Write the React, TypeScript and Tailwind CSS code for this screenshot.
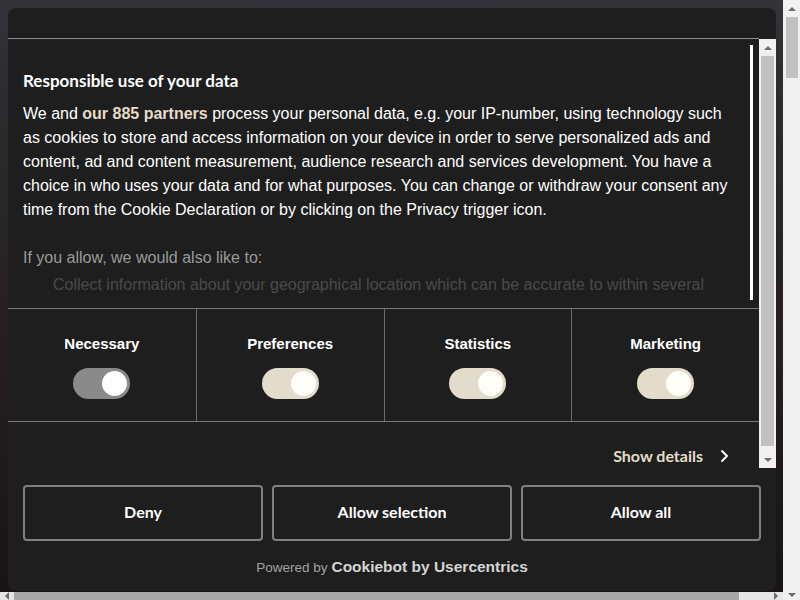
import React from 'react';

const categories = [
  { label: 'Necessary', locked: true },
  { label: 'Preferences', locked: false },
  { label: 'Statistics', locked: false },
  { label: 'Marketing', locked: false },
];

const body = "font-['Liberation_Sans',Arial,sans-serif]";
const lato = "font-['Lato','Liberation_Sans',sans-serif]";

function Toggle({ locked }: { locked: boolean }) {
  return (
    <div
      className={`w-[57px] h-[31px] rounded-full flex items-center justify-end pr-[3px] ${
        locked ? 'bg-[#8a8a8a]' : 'bg-[#e3dbcb]'
      }`}
    >
      <div className={`w-[25px] h-[25px] rounded-full ${locked ? 'bg-white' : 'bg-[#fffdf8]'}`} />
    </div>
  );
}

function Arrow({ dir }: { dir: 'up' | 'down' | 'left' | 'right' }) {
  const pts = {
    up: '0,4 4,0 8,4',
    down: '0,0 8,0 4,4',
    left: '4,0 4,8 0,4',
    right: '0,0 4,4 0,8',
  }[dir];
  const wide = dir === 'up' || dir === 'down';
  return (
    <svg width={wide ? 8 : 4} height={wide ? 4 : 8} viewBox={wide ? '0 0 8 4' : '0 0 4 8'}>
      <polygon points={pts} fill="#6b6b6b" />
    </svg>
  );
}

export default function App() {
  return (
    <div className={`w-[800px] h-[600px] flex overflow-hidden ${body}`}>
      {/* page behind the dialog */}
      <div className="w-[783px] h-[600px] flex flex-col bg-gradient-to-b from-[#34343a] via-[#2a2426] to-[#1a1516]">
        <div className="h-[592px] pt-2 pl-2 pr-[7px]">
          {/* dialog */}
          <div className="h-[583px] rounded-lg bg-[#1e1e1e] flex flex-col overflow-hidden shadow-2xl">
            <div className="h-[31px] shrink-0 border-b border-[#8c8c8c] mr-[17px]" />
            <div className="flex h-[429px] shrink-0">
              <div className="flex-1 flex flex-col">
                {/* text section */}
                <div className="h-[270px] shrink-0 flex border-b border-[#7a7a7a] overflow-hidden">
                  <div className="w-[731px] pl-[15px] pt-[30px] text-[16px] leading-6 text-white">
                    <h2 className={`${lato} font-bold text-[17px] leading-6 mb-[9px]`}>
                      Responsible use of your data
                    </h2>
                    <p>
                      We and <span className="font-bold text-[#e6dcc8]">our 885 partners</span> process your
                      personal data, e.g. your IP-number, using technology such as cookies to store and access
                      information on your device in order to serve personalized ads and content, ad and content
                      measurement, audience research and services development. You have a choice in who uses your
                      data and for what purposes. You can change or withdraw your consent any time from the Cookie
                      Declaration or by clicking on the Privacy trigger icon.
                    </p>
                    <p className="mt-6 text-[#9a9a9a]">If you allow, we would also like to:</p>
                    <p className="mt-[3px] pl-[30px] text-[#4a4a4a] whitespace-nowrap">
                      Collect information about your geographical location which can be accurate to within several
                    </p>
                  </div>
                  <div className="flex-1" />
                  <div className="w-[3px] mr-[6px] mt-[6px] h-[255px] bg-white" />
                </div>
                {/* toggles */}
                <div className="grid grid-cols-4 h-[113px] shrink-0 border-b border-[#7a7a7a]">
                  {categories.map((c, i) => (
                    <div
                      key={c.label}
                      className={`flex flex-col items-center pt-[25px] ${i > 0 ? 'border-l border-[#6b6b6b]' : ''}`}
                    >
                      <span className="font-bold text-[15px] leading-5 text-white">{c.label}</span>
                      <div className="mt-[14px]">
                        <Toggle locked={c.locked} />
                      </div>
                    </div>
                  ))}
                </div>
                <div className="flex-1 flex items-start justify-end pr-[30px] pt-[24px]">
                  <span className={`${lato} font-bold text-[16px] leading-5 text-[#e6dcc8]`}>Show details</span>
                  <svg className="ml-[17px] mt-[3px]" width="9" height="14" viewBox="0 0 9 14" fill="none">
                    <path d="M2 2l5 5-5 5" stroke="#ffffff" strokeWidth="2" strokeLinecap="round" strokeLinejoin="round" />
                  </svg>
                </div>
              </div>
              {/* inner scrollbar */}
              <div className="w-[17px] bg-[#f0f0f0] flex flex-col items-center">
                <div className="h-[17px] flex items-center justify-center">
                  <Arrow dir="up" />
                </div>
                <div className="w-[13px] flex-1 bg-[#c1c1c1] mb-[5px]" />
                <div className="h-[17px] flex items-center justify-center">
                  <Arrow dir="down" />
                </div>
              </div>
            </div>
            {/* buttons */}
            <div className="grid grid-cols-3 gap-[9px] px-[15px] mt-[17px]">
              {['Deny', 'Allow selection', 'Allow all'].map((b) => (
                <button
                  key={b}
                  className={`${lato} h-[56px] pb-[2px] rounded border-2 border-[#808080] text-white font-bold text-[16px]`}
                >
                  {b}
                </button>
              ))}
            </div>
            <div className="flex items-baseline justify-center mt-[14px]">
              <span className="text-[13.5px] text-[#a3a3a3]">Powered by</span>
              <span className="ml-1 text-[15.5px] font-bold text-[#d4d4d4]">Cookiebot by Usercentrics</span>
            </div>
          </div>
        </div>
        {/* horizontal page scrollbar (cut off) */}
        <div className="h-2 flex items-start bg-[#e6e6e6]">
          <div className="w-[14px] h-2 flex items-center justify-center">
            <Arrow dir="left" />
          </div>
          <div className="w-[725px] h-2 bg-[#a8a8a8]" />
          <div className="flex-1" />
          <div className="w-[14px] h-2 flex items-center justify-center">
            <Arrow dir="right" />
          </div>
        </div>
      </div>
      {/* vertical page scrollbar */}
      <div className="w-[17px] h-[600px] bg-[#f1f1f1] flex flex-col items-center">
        <div className="h-[17px] flex items-center justify-center">
          <Arrow dir="up" />
        </div>
        <div className="w-[12px] h-[61px] bg-[#c1c1c1]" />
        <div className="flex-1" />
        <div className="h-[12px] flex items-end justify-center pb-[3px]">
          <Arrow dir="down" />
        </div>
      </div>
    </div>
  );
}
